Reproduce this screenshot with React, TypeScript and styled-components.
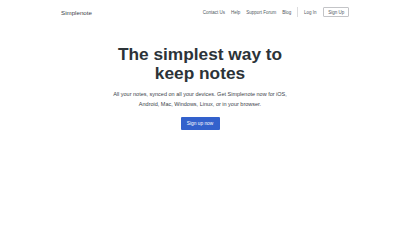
import React from "react";
import styled, { createGlobalStyle } from "styled-components";

const GlobalStyle = createGlobalStyle`
  html, body {
    margin: 0;
    padding: 0;
    background: #ffffff;
  }
  body {
    font-family: "Liberation Sans", Arial, sans-serif;
    color: #2c3338;
  }
  * {
    box-sizing: border-box;
  }
`;

const Page = styled.div`
  width: 400px;
  height: 225px;
  display: flex;
  flex-direction: column;
  align-items: center;
`;

const Header = styled.header`
  width: 298px;
  height: 24px;
  display: flex;
  align-items: center;
  justify-content: space-between;
`;

const Logo = styled.a`
  margin-left: 10px;
  font-size: 6.2px;
  color: #3c434a;
  text-decoration: none;
`;

const Nav = styled.nav`
  display: flex;
  align-items: center;
  gap: 6px;
`;

const NavLink = styled.a`
  font-size: 4.5px;
  color: #50575e;
  text-decoration: none;
  white-space: nowrap;
`;

const Divider = styled.span`
  width: 0.5px;
  height: 10px;
  background: #dcdcde;
`;

const OutlineButton = styled.a`
  height: 10px;
  padding: 0 3.8px;
  display: flex;
  align-items: center;
  border: 0.6px solid #c3c4c7;
  border-radius: 1px;
  font-size: 4.5px;
  color: #50575e;
  text-decoration: none;
  margin-left: 1px;
`;

const Hero = styled.main`
  margin-top: 21px;
  display: flex;
  flex-direction: column;
  align-items: center;
  text-align: center;
`;

const Title = styled.h1`
  margin: 0;
  width: 200px;
  font-size: 17.3px;
  line-height: 19px;
  font-weight: 700;
  color: #2c3338;
`;

const Lead = styled.p`
  margin: 7.4px 0 0;
  font-size: 5.5px;
  line-height: 9.3px;
  color: #3c434a;
`;

const PrimaryButton = styled.a`
  margin-top: 8px;
  width: 39px;
  height: 13px;
  display: flex;
  align-items: center;
  justify-content: center;
  background: #3361cc;
  border-radius: 1px;
  font-size: 4.8px;
  color: #ffffff;
  text-decoration: none;
`;

const links = ["Contact Us", "Help", "Support Forum", "Blog"];

export default function App() {
  return (
    <>
      <GlobalStyle />
      <Page>
        <Header>
          <Logo href="#">Simplenote</Logo>
          <Nav>
            {links.map((l) => (
              <NavLink key={l} href="#">
                {l}
              </NavLink>
            ))}
            <Divider />
            <NavLink href="#">Log In</NavLink>
            <OutlineButton href="#">Sign Up</OutlineButton>
          </Nav>
        </Header>
        <Hero>
          <Title>The simplest way to keep notes</Title>
          <Lead>
            All your notes, synced on all your devices. Get Simplenote now for iOS,
            <br />
            Android, Mac, Windows, Linux, or in your browser.
          </Lead>
          <PrimaryButton href="#">Sign up now</PrimaryButton>
        </Hero>
      </Page>
    </>
  );
}
